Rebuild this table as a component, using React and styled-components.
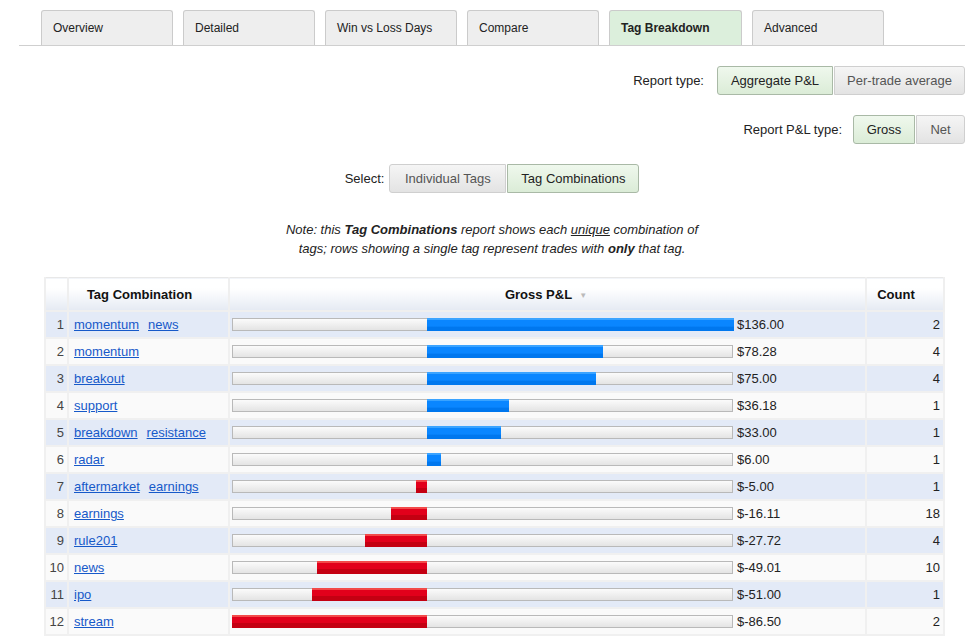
import React from "react";
import styled, { createGlobalStyle } from "styled-components";

const GlobalStyle = createGlobalStyle`
  html, body { margin: 0; padding: 0; background: #fff; }
  body {
    font-family: "Liberation Sans", Arial, Helvetica, sans-serif;
    color: #222;
    font-size: 13px;
  }
`;

const Page = styled.div`
  padding: 10px 10px 0 19px;
`;

const TabBar = styled.div`
  display: flex;
  gap: 10px;
  padding-left: 22px;
  height: 35px;
  border-bottom: 1px solid #cfcfcf;
`;

const Tab = styled.div`
  box-sizing: border-box;
  width: ${(p) => p.$w || 132}px;
  height: 35px;
  padding: 10px 0 0 11px;
  font-size: 12px;
  font-weight: ${(p) => (p.$active ? 700 : 400)};
  background: ${(p) => (p.$active ? "#dcefdc" : "#eeeeee")};
  border: 1px solid #cbcbcb;
  border-bottom: none;
  border-radius: 3px 3px 0 0;
  color: #222;
`;

const ControlRow = styled.div`
  display: flex;
  align-items: center;
  justify-content: ${(p) => (p.$center ? "center" : "flex-end")};
  gap: ${(p) => p.$gap}px;
  margin-top: ${(p) => p.$mt}px;
  height: 29px;
`;

const Label = styled.span`
  font-size: 13px;
  color: #222;
`;

const Group = styled.div`
  display: flex;
  gap: 1px;
`;

const ToggleButton = styled.div`
  box-sizing: border-box;
  width: ${(p) => p.$w}px;
  height: 29px;
  display: flex;
  align-items: center;
  justify-content: center;
  font-size: 13px;
  color: ${(p) => (p.$active ? "#222" : "#555")};
  background: ${(p) =>
    p.$active
      ? "linear-gradient(#eff8ed, #dbecd7)"
      : "linear-gradient(#f5f5f5, #e3e3e3)"};
  border: 1px solid ${(p) => (p.$active ? "#a9b9a6" : "#cfcfcf")};
  border-radius: ${(p) => (p.$first ? "3px 0 0 3px" : "0 3px 3px 0")};
`;

const Note = styled.p`
  margin: 27px 0 0;
  text-align: center;
  font-size: 13px;
  font-style: italic;
  line-height: 19px;
  color: #222;
  u { text-decoration: underline; }
`;

const Table = styled.table`
  margin: 19px 0 0 25px;
  width: 899px;
  border-collapse: collapse;
  border: 1px solid #e8e8e8;
  font-size: 13px;
  table-layout: fixed;
`;

const HeadCell = styled.th`
  height: 32px;
  padding: 0;
  font-weight: 700;
  text-align: center;
  background: linear-gradient(#ffffff 30%, #e5eaf3);
  border: 2px solid #efefef;
  border-top: none;
  color: #111;
`;

const SortArrow = styled.span`
  display: inline-block;
  width: 14px;
  margin-left: 4px;
  font-size: 8px;
  color: #bbb;
  visibility: ${(p) => (p.$show ? "visible" : "hidden")};
  vertical-align: 1px;
`;

const Row = styled.tr`
  background: ${(p) => (p.$odd ? "#e3eaf7" : "#fafafa")};
`;

const Cell = styled.td`
  height: 25px;
  padding: 0 ${(p) => p.$pr || 0}px 0 ${(p) => p.$pl || 0}px;
  text-align: ${(p) => p.$align || "left"};
  border: 2px solid #f0f0f0;
  color: ${(p) => p.$color || "#222"};
  white-space: nowrap;
  overflow: hidden;
`;

const TagLink = styled.a`
  color: #1659c9;
  text-decoration: underline;
  margin-right: 9px;
  cursor: pointer;
`;

const BarWrap = styled.div`
  display: flex;
  align-items: center;
  gap: 4px;
`;

const Track = styled.div`
  position: relative;
  box-sizing: border-box;
  width: 501px;
  height: 13px;
  border: 1px solid #b9b9b9;
  background: linear-gradient(#fbfbfb, #e4e4e4);
  flex: none;
`;

const Fill = styled.div`
  position: absolute;
  top: -1px;
  bottom: -1px;
  background: ${(p) =>
    p.$neg
      ? "linear-gradient(#f24a4a 0, #f24a4a 15%, #e2001b 16%, #e2001b 60%, #c40012 61%, #c40012 100%)"
      : "linear-gradient(#3aa3ff 0, #3aa3ff 15%, #0a86ff 16%, #0a86ff 65%, #0077ee 66%, #0077ee 100%)"};
`;

const Value = styled.span`
  font-size: 13px;
  color: #222;
`;

const rows = [
  { tags: ["momentum", "news"], v: 136.0, c: 2 },
  { tags: ["momentum"], v: 78.28, c: 4 },
  { tags: ["breakout"], v: 75.0, c: 4 },
  { tags: ["support"], v: 36.18, c: 1 },
  { tags: ["breakdown", "resistance"], v: 33.0, c: 1 },
  { tags: ["radar"], v: 6.0, c: 1 },
  { tags: ["aftermarket", "earnings"], v: -5.0, c: 1 },
  { tags: ["earnings"], v: -16.11, c: 18 },
  { tags: ["rule201"], v: -27.72, c: 4 },
  { tags: ["news"], v: -49.01, c: 10 },
  { tags: ["ipo"], v: -51.0, c: 1 },
  { tags: ["stream"], v: -86.5, c: 2 },
];

const ZERO = 194;
const SCALE = 2.254;

function Bar({ v }) {
  const w = Math.abs(v) * SCALE;
  const style = v >= 0 ? { left: ZERO, width: w } : { left: ZERO - w, width: w };
  return (
    <BarWrap>
      <Track>
        <Fill $neg={v < 0} style={style} />
      </Track>
      <Value>${v.toFixed(2)}</Value>
    </BarWrap>
  );
}

export default function App() {
  const tabs = ["Overview", "Detailed", "Win vs Loss Days", "Compare", "Tag Breakdown", "Advanced"];
  return (
    <>
      <GlobalStyle />
      <Page>
        <TabBar>
          {tabs.map((t) => (
            <Tab key={t} $active={t === "Tag Breakdown"} $w={t === "Tag Breakdown" ? 133 : 132}>
              {t}
            </Tab>
          ))}
        </TabBar>

        <ControlRow $mt={20} $gap={13}>
          <Label>Report type:</Label>
          <Group>
            <ToggleButton $w={116} $active $first>Aggregate P&amp;L</ToggleButton>
            <ToggleButton $w={131}>Per-trade average</ToggleButton>
          </Group>
        </ControlRow>

        <ControlRow $mt={20} $gap={11}>
          <Label>Report P&amp;L type:</Label>
          <Group>
            <ToggleButton $w={62} $active $first>Gross</ToggleButton>
            <ToggleButton $w={49}>Net</ToggleButton>
          </Group>
        </ControlRow>

        <ControlRow $mt={20} $gap={5} $center>
          <Label>Select:</Label>
          <Group>
            <ToggleButton $w={117} $first>Individual Tags</ToggleButton>
            <ToggleButton $w={132} $active>Tag Combinations</ToggleButton>
          </Group>
        </ControlRow>

        <Note>
          Note: this <b>Tag Combinations</b> report shows each <u>unique</u> combination of
          <br />
          tags; rows showing a single tag represent trades with <b>only</b> that tag.
        </Note>

        <Table>
          <colgroup>
            <col style={{ width: 23 }} />
            <col style={{ width: 161 }} />
            <col style={{ width: 637 }} />
            <col style={{ width: 78 }} />
          </colgroup>
          <thead>
            <tr>
              <HeadCell />
              <HeadCell>
                Tag Combination<SortArrow>▼</SortArrow>
              </HeadCell>
              <HeadCell>
                Gross P&amp;L<SortArrow $show>▼</SortArrow>
              </HeadCell>
              <HeadCell>
                Count<SortArrow>▼</SortArrow>
              </HeadCell>
            </tr>
          </thead>
          <tbody>
            {rows.map((r, i) => (
              <Row key={i} $odd={i % 2 === 0}>
                <Cell $align="right" $pr={3} $color="#444">{i + 1}</Cell>
                <Cell $pl={5}>
                  {r.tags.map((t) => (
                    <TagLink key={t}>{t}</TagLink>
                  ))}
                </Cell>
                <Cell $pl={2}>
                  <Bar v={r.v} />
                </Cell>
                <Cell $align="right" $pr={3}>{r.c}</Cell>
              </Row>
            ))}
          </tbody>
        </Table>
      </Page>
    </>
  );
}
